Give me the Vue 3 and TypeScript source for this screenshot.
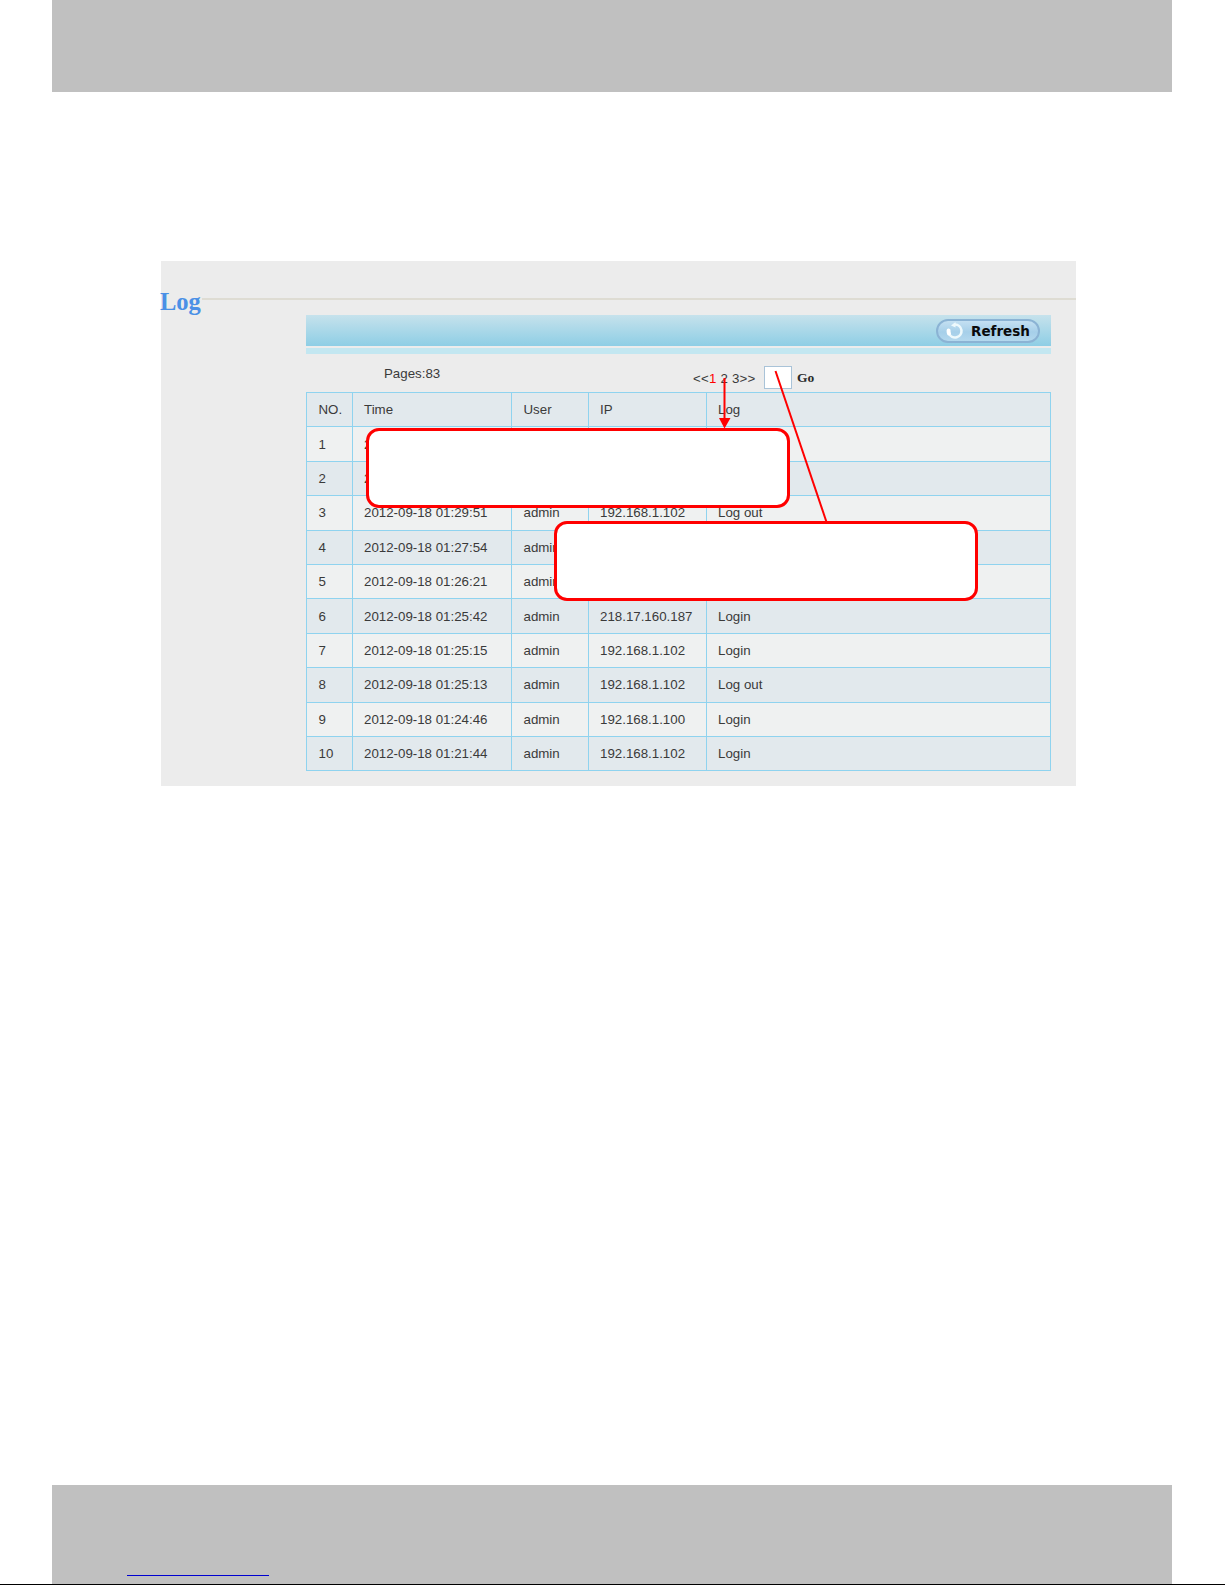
<script setup lang="ts">
interface Row { no: number; time: string; user: string; ip: string; log: string }
const rows: Row[] = [
  { no: 1, time: '2012-09-18 01:30:12', user: 'admin', ip: '192.168.1.102', log: 'Login' },
  { no: 2, time: '2012-09-18 01:30:02', user: 'admin', ip: '192.168.1.102', log: 'Login' },
  { no: 3, time: '2012-09-18 01:29:51', user: 'admin', ip: '192.168.1.102', log: 'Log out' },
  { no: 4, time: '2012-09-18 01:27:54', user: 'admin', ip: '192.168.1.102', log: 'Login' },
  { no: 5, time: '2012-09-18 01:26:21', user: 'admin', ip: '192.168.1.102', log: 'Login' },
  { no: 6, time: '2012-09-18 01:25:42', user: 'admin', ip: '218.17.160.187', log: 'Login' },
  { no: 7, time: '2012-09-18 01:25:15', user: 'admin', ip: '192.168.1.102', log: 'Login' },
  { no: 8, time: '2012-09-18 01:25:13', user: 'admin', ip: '192.168.1.102', log: 'Log out' },
  { no: 9, time: '2012-09-18 01:24:46', user: 'admin', ip: '192.168.1.100', log: 'Login' },
  { no: 10, time: '2012-09-18 01:21:44', user: 'admin', ip: '192.168.1.102', log: 'Login' },
]
</script>

<template>
  <div class="page">
    <header class="band"></header>

    <section class="panel">
      <div class="heading">
        <h2 class="title">Log</h2>
        <div class="rule"></div>
      </div>

      <div class="content">
        <div class="toolbar">
          <button class="refresh" type="button">
            <svg class="refresh-icon" width="20" height="20" viewBox="0 0 20 20">
              <path d="M10 3.5 A6.5 6.5 0 1 1 4 12.5" fill="none" stroke="#eef9fc" stroke-width="2.6" />
              <path d="M4 12.5 A6.5 6.5 0 0 1 3.6 9.5" fill="none" stroke="#ffffff" stroke-width="4" stroke-linecap="round" />
              <path d="M6 4.5 L10.5 1 L10.5 6.5 Z" fill="#eef9fc" />
            </svg>
            <span>Refresh</span>
          </button>
        </div>
        <div class="strip"></div>

        <div class="pager">
          <span class="pages">Pages:83</span>
          <span class="links">&lt;&lt;<em>1</em> 2 3&gt;&gt;</span>
          <input class="jump" type="text" />
          <span class="go">Go</span>
        </div>

        <div class="table">
          <div class="row head">
            <div class="cell">NO.</div>
            <div class="cell">Time</div>
            <div class="cell">User</div>
            <div class="cell">IP</div>
            <div class="cell">Log</div>
          </div>
          <div v-for="r in rows" :key="r.no" class="row" :class="{ alt: r.no % 2 === 0 }">
            <div class="cell">{{ r.no }}</div>
            <div class="cell">{{ r.time }}</div>
            <div class="cell">{{ r.user }}</div>
            <div class="cell">{{ r.ip }}</div>
            <div class="cell">{{ r.log }}</div>
          </div>
        </div>
      </div>
    </section>

    <footer class="band foot">
      <a class="link" href="#"></a>
    </footer>

    <div class="callout one"></div>
    <div class="callout two"></div>
    <svg class="marks" width="1225" height="1585" viewBox="0 0 1225 1585">
      <line x1="724.5" y1="378" x2="724.5" y2="420" stroke="#f00" stroke-width="2" />
      <path d="M719 418 H730.5 L724.5 428.5 Z" fill="#f00" />
      <line x1="775.5" y1="371" x2="826.5" y2="522" stroke="#f00" stroke-width="2" />
    </svg>
  </div>
</template>

<style>
html, body { margin: 0; background: #fff; }
</style>

<style scoped>
.page {
  position: relative;
  width: 1225px;
  height: 1585px;
  display: flex;
  flex-direction: column;
  background: #fff;
  font-family: "Liberation Sans", Arial, sans-serif;
  font-size: 13.3px;
  color: #3a3a3a;
  overflow: hidden;
  box-sizing: border-box;
  border-bottom: 1px solid #000;
}
.band {
  width: 1120px;
  height: 92px;
  margin-left: 52px;
  background: #c0c0c0;
  flex: none;
}
.foot {
  height: 99px;
  margin-top: auto;
  display: flex;
  align-items: flex-end;
  box-sizing: border-box;
  padding: 0 0 8px 75px;
}
.link {
  display: block;
  width: 142px;
  height: 1px;
  background: #0000d0;
}
.panel {
  width: 915px;
  height: 525px;
  margin: 169px 0 0 161px;
  background: #ececec;
  flex: none;
  box-sizing: border-box;
  padding-top: 24px;
}
.heading {
  display: flex;
  align-items: flex-start;
  height: 30px;
}
.title {
  margin: 0 0 0 -1px;
  padding-top: 2px;
  font: bold 24.5px/30px "Liberation Serif", "Times New Roman", serif;
  color: #4a90e6;
  width: 42px;
  flex: none;
}
.rule {
  flex: 1;
  height: 2px;
  margin-top: 13px;
  background: #dedcd3;
}
.content {
  margin: 0 25px 0 145px;
}
.toolbar {
  height: 31px;
  display: flex;
  align-items: center;
  justify-content: flex-end;
  padding-right: 11px;
  background: linear-gradient(#c6e2ec, #8ecee5);
}
.strip {
  height: 6px;
  margin-top: 2px;
  background: #c3e7f1;
}
.refresh {
  width: 104px;
  height: 24px;
  padding: 0 0 0 8px;
  display: flex;
  align-items: center;
  gap: 6px;
  box-sizing: border-box;
  border: 2px solid #8bb3d4;
  border-radius: 12px;
  background: linear-gradient(#c4e0f2, #a6cfe9 55%, #b3d8ee);
  font: bold 13.5px "DejaVu Sans", Verdana, sans-serif;
  color: #0a0a0a;
}
.refresh-icon { flex: none; margin-left: -1px; }
.pager {
  height: 38px;
  position: relative;
  display: flex;
  align-items: flex-start;
}
.pages {
  margin: 12px 0 0 78px;
  width: 309px;
}
.links {
  margin-top: 17px;
  width: 71px;
  letter-spacing: 0.2px;
}
.links em { color: #f00; font-style: normal; }
.jump {
  width: 28px;
  height: 23px;
  margin: 12px 5px 0 0;
  padding: 0;
  box-sizing: border-box;
  background: #fff;
  border: 1px solid #a9c3d8;
  outline: none;
}
.go {
  margin-top: 16px;
  font: bold 13.5px "Liberation Serif", serif;
  color: #2a2a2a;
}
.table {
  border-top: 1px solid #8fd3ef;
  border-left: 1px solid #8fd3ef;
}
.row {
  display: grid;
  grid-template-columns: 45.5px 159.5px 76.5px 118px 1fr;
  height: 34.4px;
  background: #eff1f1;
  box-sizing: border-box;
}
.row.alt, .row.head { background: #e2e9ed; }
.cell {
  display: flex;
  align-items: center;
  box-sizing: border-box;
  padding-left: 11.5px;
  border-right: 1px solid #8fd3ef;
  border-bottom: 1px solid #8fd3ef;
  white-space: nowrap;
}
.callout {
  position: absolute;
  box-sizing: border-box;
  background: #fff;
  border: 3px solid #f00;
  border-radius: 13px;
}
.one { left: 366px; top: 428px; width: 423.5px; height: 79.5px; }
.two { left: 554px; top: 521px; width: 424px; height: 79.5px; }
.marks { position: absolute; left: 0; top: 0; pointer-events: none; }
</style>
